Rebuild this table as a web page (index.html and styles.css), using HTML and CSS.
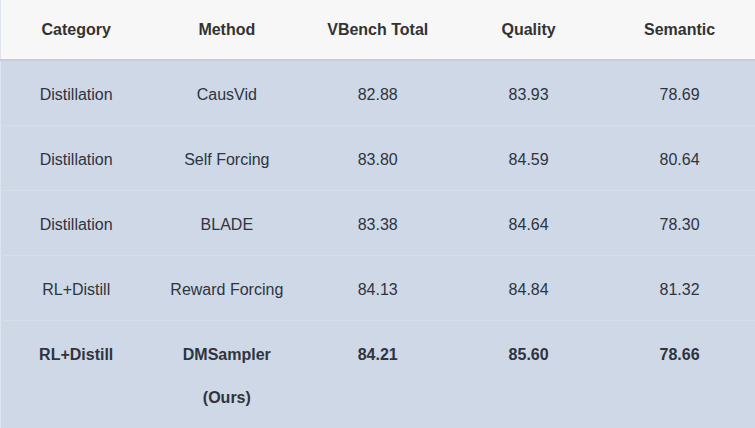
FILE: index.html
```html
<!DOCTYPE html>
<html lang="en">
<head>
	<meta charset="UTF-8">
	<meta name="viewport" content="width=device-width, initial-scale=1.0">
	<title>VBench Results</title>
	<link rel="stylesheet" href="styles.css">
</head>
<body>
	<table class="results">
		<thead>
			<tr>
				<th>Category</th>
				<th>Method</th>
				<th>VBench Total</th>
				<th>Quality</th>
				<th>Semantic</th>
			</tr>
		</thead>
		<tbody>
			<tr>
				<td>Distillation</td>
				<td>CausVid</td>
				<td>82.88</td>
				<td>83.93</td>
				<td>78.69</td>
			</tr>
			<tr>
				<td>Distillation</td>
				<td>Self Forcing</td>
				<td>83.80</td>
				<td>84.59</td>
				<td>80.64</td>
			</tr>
			<tr>
				<td>Distillation</td>
				<td>BLADE</td>
				<td>83.38</td>
				<td>84.64</td>
				<td>78.30</td>
			</tr>
			<tr>
				<td>RL+Distill</td>
				<td>Reward Forcing</td>
				<td>84.13</td>
				<td>84.84</td>
				<td>81.32</td>
			</tr>
			<tr class="ours">
				<td>RL+Distill</td>
				<td>DMSampler<br>(Ours)</td>
				<td>84.21</td>
				<td>85.60</td>
				<td>78.66</td>
			</tr>
		</tbody>
	</table>
</body>
</html>
```

FILE: styles.css
```css
body {
	font-family: "Liberation Sans", Arial, sans-serif;
	margin: 0;
	padding: 0;
	background-color: #ced8e7;
	overflow: hidden;
}
.results {
	width: 755px;
	border-collapse: collapse;
	table-layout: fixed;
	font-size: 16px;
	color: #2f3440;
	border-left: 1px solid #dfe5ef;
}
.results th, .results td {
	text-align: center;
	vertical-align: top;
	line-height: 43px;
	padding: 0;
}
.results thead th {
	background-color: #f7f7f7;
	color: #333;
	font-weight: bold;
	height: 60px;
	padding-top: 8px;
	box-sizing: border-box;
	border-bottom: 2px solid #c9cdd5;
}
.results tbody td {
	height: 65px;
	padding-top: 12px;
	box-sizing: border-box;
	border-bottom: 1px solid #d6deea;
}
.results tbody tr.ours td {
	font-weight: bold;
	height: auto;
	padding-bottom: 10px;
	border-bottom: none;
}
```
